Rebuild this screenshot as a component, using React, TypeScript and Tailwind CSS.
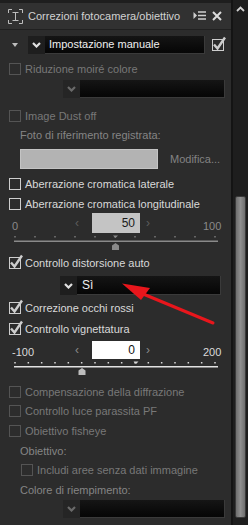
import React from "react";

const FONT = { fontFamily: '"Liberation Sans", Arial, sans-serif' };

function Box({ checked = false, disabled = false }: { checked?: boolean; disabled?: boolean }) {
  const c = disabled ? "#545454" : "#cdcdcd";
  return (
    <svg width="12" height="12" viewBox="0 0 12 12" className="shrink-0 overflow-visible">
      <rect x="0.5" y="0.5" width="11" height="11" fill="none" stroke={c} />
      {checked && <path d="M2 5.5 L5.5 9.5 L13 -1.5" stroke={c} strokeWidth="2.4" fill="none" />}
    </svg>
  );
}

function Row({
  label,
  checked,
  disabled,
  mt,
  indent = false,
}: {
  label: string;
  checked?: boolean;
  disabled?: boolean;
  mt: string;
  indent?: boolean;
}) {
  return (
    <div className={`flex items-center h-[14px] gap-[4px] whitespace-nowrap ${mt} ${indent ? "pl-[21px]" : "pl-[9px]"}`}>
      <Box checked={checked} disabled={disabled} />
      <span className={disabled ? "text-[#787878]" : "text-[#d9d9d9]"}>{label}</span>
    </div>
  );
}

function Chevron({ dim }: { dim?: boolean }) {
  return (
    <svg width="9" height="6" viewBox="0 0 9 6">
      <path d="M1 1 L4.5 4.5 L8 1" stroke={dim ? "#6a6a6a" : "#e0e0e0"} strokeWidth="2.2" fill="none" />
    </svg>
  );
}

function Tick({ x, y, color }: { x: number; y: number; color: string }) {
  return <rect x={x} y={y} width="1.5" height="1.5" fill={color} />;
}

export default function App() {
  const dots1 = Array.from({ length: 11 }, (_, i) => 15 + i * 20);
  const dots2 = Array.from({ length: 16 }, (_, i) => 15 + (i * 200) / 15);
  return (
    <div className="w-[248px] h-[525px] flex bg-[#1d1d1d] overflow-hidden text-[11px] leading-none select-none" style={FONT}>
      <div className="relative w-[231px] flex flex-col bg-[#2c2c2c]">
        <div className="h-[3px] bg-[#1e1e1e]" />
        {/* header */}
        <div className="h-[27px] flex items-center bg-[#313131] border-b border-[#202020] pl-[8px] pr-[9px] whitespace-nowrap">
          <svg width="15" height="15" viewBox="0 0 15 15" className="shrink-0">
            <path d="M0.5 4 V0.5 H4 M11 0.5 H14.5 V4 M14.5 11 V14.5 H11 M4 14.5 H0.5 V11" stroke="#bdbdbd" fill="none" />
            <path d="M4.5 3.5 H10.5 M7.5 3.5 V11.5 M4.5 11.5 H10.5" stroke="#bdbdbd" fill="none" />
          </svg>
          <span className="ml-[5px] text-[11px] text-[#d2d2d2]">Correzioni fotocamera/obiettivo</span>
          <div className="flex-1" />
          <svg width="13" height="10" viewBox="0 0 13 10" className="shrink-0">
            <path d="M0.5 1 L4 4.5 L0.5 8 Z" fill="#cfcfcf" />
            <path d="M5 1 H13 M5 4.5 H13 M5 8 H13" stroke="#cfcfcf" strokeWidth="1.3" />
          </svg>
          <svg width="10" height="10" viewBox="0 0 10 10" className="shrink-0 ml-[6px]">
            <path d="M1 1 L9 9 M9 1 L1 9" stroke="#dcdcdc" strokeWidth="2" />
          </svg>
        </div>

        {/* row 1: preset dropdown */}
        <div className="flex items-center h-[18px] mt-[6px]">
          <svg width="6" height="4" viewBox="0 0 6 4" className="ml-[12px] shrink-0">
            <path d="M0 0 H6 L3 4 Z" fill="#bdbdbd" />
          </svg>
          <div className="ml-[10px] w-[17px] h-full bg-[#1e1e1e] flex items-center justify-center">
            <Chevron />
          </div>
          <div className="w-[160px] h-full bg-gradient-to-b from-[#151515] to-[#060606] border-r border-b border-[#3a3a3a] flex items-center pl-[4px] text-[11px] text-[#f0f0f0]">
            Impostazione manuale
          </div>
          <div className="ml-[7px]">
            <Box checked />
          </div>
        </div>

        <Row label="Riduzione moiré colore" disabled mt="mt-[8px]" />

        <div className="flex h-[18px] mt-[4px] ml-[63px]">
          <div className="w-[17px] h-full bg-[#252525] flex items-center justify-center">
            <Chevron dim />
          </div>
          <div className="w-[145px] h-full bg-gradient-to-b from-[#151515] to-[#060606] border-r border-b border-[#3a3a3a]" />
        </div>

        <Row label="Image Dust off" disabled mt="mt-[11px]" />

        <div className="h-[14px] mt-[5px] pl-[20px] flex items-center text-[#858585]">Foto di riferimento registrata:</div>

        <div className="flex items-center h-[20px] mt-[7px] pl-[20px]">
          <div className="w-[138px] h-full bg-[#b3b3b3] border border-[#c4c4c4]" />
          <span className="ml-[12px] text-[#838383]">Modifica...</span>
        </div>

        <Row label="Aberrazione cromatica laterale" mt="mt-[8px]" />
        <Row label="Aberrazione cromatica longitudinale" mt="mt-[6px]" />

        {/* slider 1 */}
        <div className="mt-[2px] h-[38px] flex flex-col">
          <div className="h-[20px] flex items-end text-[#8a8a8a]">
            <span className="w-[75px] pl-[12px] pb-[1px]">0</span>
            <span className="w-[17px] text-[#5c5c5c] self-center text-[12px]">‹</span>
            <div className="w-[48px] h-full bg-[#c4c4c4] flex items-center justify-end pr-[5px] text-[12px] text-[#1a1a1a]">50</div>
            <span className="w-[63px] pl-[6px] text-[#5c5c5c] self-center text-[12px]">›</span>
            <span className="pb-[1px]">100</span>
          </div>
          <svg width="231" height="18" viewBox="0 0 231 18">
            {dots1.map((x) => (
              <Tick key={x} x={x - 0.75} y={3} color="#7a7a7a" />
            ))}
            <path d="M113 2.5 H118 L115.5 5 Z" fill="#8a8a8a" />
            <rect x="14" y="7.5" width="204" height="1.5" fill="#8a8a8a" />
            <path d="M115.5 10 L119 12.5 V17 H112 V12.5 Z" fill="#8a8a8a" />
          </svg>
        </div>

        <Row label="Controllo distorsione auto" checked mt="mt-[5px]" />

        <div className="flex h-[19px] mt-[6px] ml-[60px]">
          <div className="w-[17px] h-full bg-[#1e1e1e] flex items-center justify-center">
            <Chevron />
          </div>
          <div className="w-[144px] h-full bg-gradient-to-b from-[#151515] to-[#060606] border-r border-b border-[#3a3a3a] flex items-center pl-[5px] text-[12px] text-[#f0f0f0]">
            Sì
          </div>
        </div>

        <Row label="Correzione occhi rossi" checked mt="mt-[6px]" />
        <Row label="Controllo vignettatura" checked mt="mt-[7px]" />

        {/* slider 2 */}
        <div className="mt-[5px] h-[34px] flex flex-col">
          <div className="h-[18px] flex items-end text-[#dadada]">
            <span className="w-[75px] pl-[12px] pb-[1px]">-100</span>
            <span className="w-[17px] text-[#8a8a8a] self-center text-[12px]">‹</span>
            <div className="w-[48px] h-full bg-white flex items-center justify-end pr-[5px] text-[12px] text-[#111]">0</div>
            <span className="w-[63px] pl-[6px] text-[#8a8a8a] self-center text-[12px]">›</span>
            <span className="pb-[1px]">200</span>
          </div>
          <svg width="231" height="16" viewBox="0 0 231 16">
            {dots2.map((x) => (
              <Tick key={x} x={x - 0.75} y={3} color="#d8d8d8" />
            ))}
            <path d="M133.5 2.5 H138.5 L136 5 Z" fill="#d8d8d8" />
            <rect x="14" y="7" width="204" height="1.5" fill="#e2e2e2" />
            <path d="M82 9 L85.5 11.5 V16 H78.5 V11.5 Z" fill="#bdbdbd" />
          </svg>
        </div>

        <Row label="Compensazione della diffrazione" disabled mt="mt-[10px]" />
        <Row label="Controllo luce parassita PF" disabled mt="mt-[5px]" />
        <Row label="Obiettivo fisheye" disabled mt="mt-[6px]" />

        <div className="h-[14px] mt-[6px] pl-[20px] flex items-center text-[#858585]">Obiettivo:</div>
        <Row label="Includi aree senza dati immagine" disabled mt="mt-[5px]" indent />
        <div className="h-[14px] mt-[6px] pl-[20px] flex items-center text-[#858585]">Colore di riempimento:</div>

        <div className="flex h-[18px] mt-[3px] ml-[63px]">
          <div className="w-[17px] h-full bg-[#252525] flex items-center justify-center">
            <Chevron dim />
          </div>
          <div className="w-[145px] h-full bg-gradient-to-b from-[#151515] to-[#060606] border-r border-b border-[#3a3a3a]" />
        </div>

        {/* red annotation arrow */}
        <svg className="absolute left-0 top-0 pointer-events-none" width="231" height="525" viewBox="0 0 231 525">
          <path d="M213 323 L136 291" stroke="#e8161c" strokeWidth="3" strokeLinecap="round" />
          <path d="M122 283.5 L150 288 L141 300 Z" fill="#e8161c" />
        </svg>
      </div>

      <div className="w-[2px] bg-[#141414]" />

      {/* scrollbar */}
      <div className="w-[15px] flex flex-col items-center bg-[#1e1e1e]">
        <svg width="9" height="6" viewBox="0 0 9 6" className="mt-[6px]">
          <path d="M1 5 L4.5 1.5 L8 5" stroke="#d0d0d0" strokeWidth="1.8" fill="none" />
        </svg>
        <div className="mt-[184px] w-[11px] h-[322px] rounded-[2px] border border-[#3a3a3a] bg-gradient-to-r from-[#6e6e6e] via-[#8f8f8f] to-[#6e6e6e]" />
      </div>
    </div>
  );
}
